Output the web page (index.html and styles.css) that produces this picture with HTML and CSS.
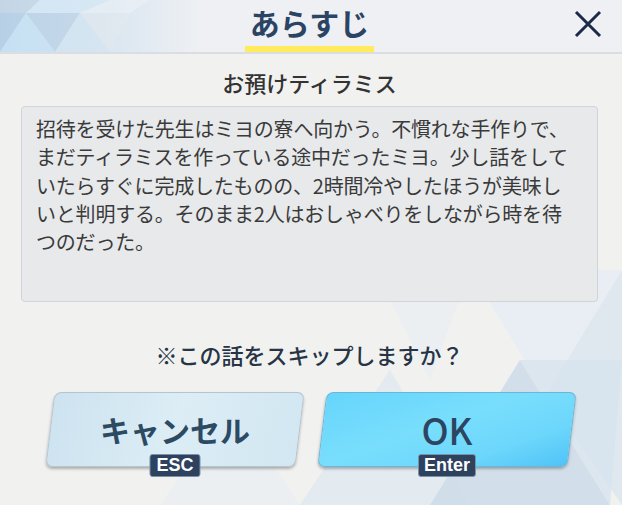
FILE: index.html
```html
<!DOCTYPE html>
<html lang="ja">
<head>
    <meta charset="UTF-8">
    <meta name="viewport" content="width=device-width, initial-scale=1.0">
    <title>あらすじ</title>
    <link rel="stylesheet" href="styles.css">
</head>
<body>
<div class="screen">
    <!-- faint triangle pattern behind the dialog -->
    <svg class="bg-pattern" viewBox="0 0 622 505" aria-hidden="true">
        <polygon points="470,270 622,270 546,395" fill="#e4ecf3" opacity="0.7"/>
        <polygon points="546,395 622,270 622,505" fill="#dbe6ef" opacity="0.8"/>
        <polygon points="390,300 470,270 430,380" fill="#e8eef3" opacity="0.6"/>
        <polygon points="300,505 390,370 470,505" fill="#dde7ef" opacity="0.7"/>
        <polygon points="430,505 520,360 610,505" fill="#cbdbe9" opacity="0.8"/>
        <polygon points="520,360 622,360 610,505" fill="#d7e4ee" opacity="0.8"/>
        <polygon points="160,505 230,400 300,505" fill="#e9eef2" opacity="0.6"/>
    </svg>

    <header class="header">
        <svg class="header-pattern" viewBox="0 0 200 52" aria-hidden="true">
            <defs>
                <linearGradient id="fade" x1="0" x2="1" y1="0" y2="0">
                    <stop offset="0" stop-color="#eef0f3" stop-opacity="0"/>
                    <stop offset="0.55" stop-color="#eef0f3" stop-opacity="0.2"/>
                    <stop offset="1" stop-color="#eef0f3" stop-opacity="1"/>
                </linearGradient>
            </defs>
            <rect x="0" y="0" width="200" height="52" fill="#d5e4f0"/>
            <polygon points="0,0 40,0 26,13 0,13" fill="#c4d6e6"/>
            <polygon points="0,13 26,13 0,52" fill="#b8d0e6"/>
            <polygon points="26,13 55,52 0,52" fill="#c6e0f3"/>
            <polygon points="26,13 80,13 55,52" fill="#bcd3e7"/>
            <polygon points="80,13 110,52 55,52" fill="#cfe3f1"/>
            <polygon points="40,0 110,0 80,13 26,13" fill="#d2e6f5"/>
            <polygon points="110,0 150,0 130,13 80,13" fill="#e2ecf4"/>
            <polygon points="80,13 130,13 110,52" fill="#dbe5ee"/>
            <rect x="0" y="0" width="200" height="52" fill="url(#fade)"/>
        </svg>
        <h1 class="title"><span>あらすじ</span></h1>
        <button class="close-btn" aria-label="閉じる">
            <svg viewBox="0 0 28 28" width="28" height="28">
                <path d="M2 2 L26 26 M26 2 L2 26" stroke="#1c2a48" stroke-width="3" fill="none"/>
            </svg>
        </button>
    </header>

    <main class="content">
        <h2 class="episode-name">お預けティラミス</h2>
        <div class="summary-box">
            <p>招待を受けた先生はミヨの寮へ向かう。不慣れな手作りで、<br>まだティラミスを作っている途中だったミヨ。少し話をして<br>いたらすぐに完成したものの、2時間冷やしたほうが美味し<br>いと判明する。そのまま2人はおしゃべりをしながら時を待<br>つのだった。</p>
        </div>
        <p class="question">※この話をスキップしますか？</p>
        <div class="actions">
            <button class="action cancel">
                <span class="label">キャンセル</span>
                <span class="key">ESC</span>
            </button>
            <button class="action ok">
                <span class="label">OK</span>
                <span class="key">Enter</span>
            </button>
        </div>
    </main>
</div>
</body>
</html>
```

FILE: styles.css
```css
:root {
    --navy: #2c4464;
    --text: #3a3a3a;
}

body {
    margin: 0;
    background-color: #f1f1f0;
    font-family: "Noto Sans CJK JP", "Noto Sans", sans-serif;
}

.screen {
    position: relative;
    width: 622px;
    height: 505px;
    overflow: hidden;
}

.bg-pattern {
    position: absolute;
    left: 0;
    top: 0;
    width: 622px;
    height: 505px;
}

/* header bar */
.header {
    position: relative;
    height: 52px;
    background-color: #eef0f3;
    border-bottom: 2px solid #dadde1;
    display: flex;
    justify-content: center;
    align-items: flex-end;
}
.header-pattern {
    position: absolute;
    left: 0;
    top: 0;
    width: 200px;
    height: 52px;
}
.title {
    position: relative;
    margin: 0 0 0 -3px;
    font-size: 30px;
    font-weight: bold;
    color: var(--navy);
    line-height: 44px;
}
.title span {
    display: block;
    padding: 0 5px 2px;
    border-bottom: 6px solid #ffeb5c;
}
.close-btn {
    position: absolute;
    top: 10px;
    right: 20px;
    width: 28px;
    height: 28px;
    padding: 0;
    border: none;
    background: none;
    cursor: pointer;
}
.close-btn svg {
    display: block;
}

/* body of the dialog */
.content {
    position: relative;
    padding: 0 24px 0 21px;
}
.episode-name {
    margin: 13px 0 9px;
    font-size: 22px;
    font-weight: 500;
    line-height: 30px;
    text-align: center;
    color: #333;
}
.summary-box {
    height: 196px;
    box-sizing: border-box;
    padding: 8px 14px;
    background-color: #e7e9eb;
    border: 1px solid #d0d4d8;
    border-radius: 4px;
}
.summary-box p {
    margin: 0;
    font-size: 20px;
    line-height: 28.3px;
    letter-spacing: -0.2px;
    color: var(--text);
    white-space: nowrap;
}
.question {
    margin: 37px 0 23px;
    font-size: 22px;
    font-weight: 500;
    line-height: 30px;
    text-align: center;
    color: #263445;
}

/* buttons */
.actions {
    display: flex;
    justify-content: center;
    gap: 22px;
    padding-left: 3px;
}
.action {
    position: relative;
    width: 250px;
    height: 75px;
    padding: 0;
    border: none;
    background: none;
    font-family: inherit;
    cursor: pointer;
}
.action::before {
    content: '';
    position: absolute;
    left: 0;
    top: 0;
    right: 0;
    bottom: 0;
    transform: skewX(-7deg);
    border-radius: 7px;
    border: 1px solid;
    box-shadow: 0 2px 3px rgba(0, 0, 0, 0.28);
}
.cancel::before {
    background: linear-gradient(100deg, #cde3f0 0%, #dcedf5 50%, #d2e7f2 100%);
    border-color: #b4c5d1;
}
.ok::before {
    background: linear-gradient(160deg, #66d5fb 0%, #79defd 45%, #6cd6fb 75%, #4fc3f7 100%);
    border-color: #69b6d6;
}
.label {
    position: relative;
    display: block;
    font-size: 30px;
    font-weight: bold;
    line-height: 75px;
    color: #2c4a62;
}
.ok .label {
    font-size: 36px;
    font-weight: 500;
    color: #2c4560;
}
.key {
    position: absolute;
    left: 50%;
    bottom: -10px;
    transform: translateX(-50%);
    padding: 0 6px;
    background-color: #2c425f;
    border: 1px solid #7e90a6;
    border-radius: 3px;
    color: #fff;
    font-family: "Liberation Sans", Arial, sans-serif;
    font-size: 18px;
    font-weight: bold;
    line-height: 21px;
}
.ok .key {
    padding: 0 5px;
}
```
